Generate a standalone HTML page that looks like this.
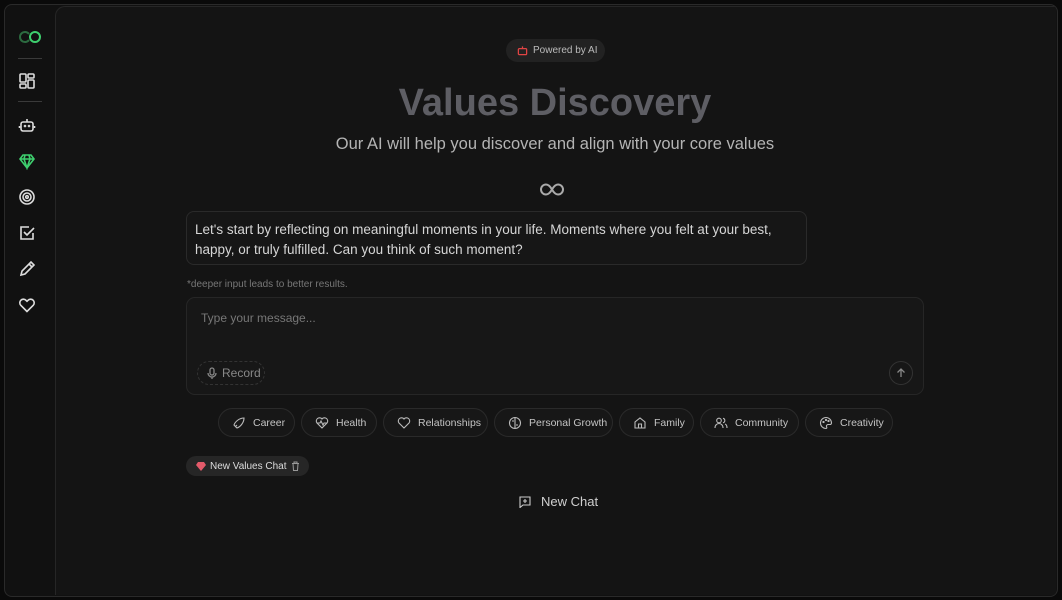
<!DOCTYPE html>
<html><head><meta charset="utf-8"><style>
*{box-sizing:border-box;margin:0;padding:0}
body{width:1062px;height:600px;background:#0a0a0a;font-family:"Liberation Sans",sans-serif;overflow:hidden;position:relative;color:#ccc}
.frame{position:absolute;left:4px;top:4px;width:1054px;height:593px;border:1px solid #2a2a2a;border-radius:8px;background:#111;overflow:hidden}
.side{position:absolute;left:0;top:0;width:50px;height:100%}
.main{position:absolute;left:50px;top:1px;right:1px;bottom:1px;background:#141414;border-left:1px solid #262626;border-top:1px solid #262626;border-radius:10px 0 0 0}
.ic{position:absolute;left:13px;width:18px;height:18px}
.hr{position:absolute;left:13px;width:24px;height:1px;background:#3a3a3a}
.abs{position:absolute}
.pill{position:absolute;height:29px;top:408px;border:1px solid #2a2a2a;border-radius:15px;background:#171717;font-size:10.5px;color:#c4c4c4;display:flex;align-items:center;padding-left:13px;gap:7px;white-space:nowrap}
.pill svg{width:14px;height:14px;flex:none}
</style></head><body>
<div class="frame">
<div class="side">
 <svg class="ic" style="top:23px;left:14px;width:22px" viewBox="0 0 22 14" fill="none" stroke-width="2"><path d="M10 4A5 5 0 1 0 10 10" stroke="#2c6b40"/><circle cx="16" cy="7" r="5" stroke="#3ecf6e"/></svg>
 <div class="hr" style="top:53px"></div>
 <svg class="ic" style="top:67px" viewBox="0 0 18 18" fill="none" stroke="#ddd" stroke-width="1.6"><rect x="2" y="2" width="6" height="8" rx="1"/><rect x="10" y="2" width="6" height="4" rx="1"/><rect x="10" y="8" width="6" height="8" rx="1"/><rect x="2" y="12" width="6" height="4" rx="1"/></svg>
 <div class="hr" style="top:96px"></div>
 <svg class="ic" style="top:111px" viewBox="0 0 18 18" fill="none" stroke="#ddd" stroke-width="1.6"><rect x="3" y="6" width="12" height="9" rx="2"/><path d="M9 6V3M1.5 10v2M16.5 10v2"/><circle cx="7" cy="10" r=".5"/><circle cx="11" cy="10" r=".5"/></svg>
 <svg class="ic" style="top:147px" viewBox="0 0 18 18" fill="none" stroke="#3ecf6e" stroke-width="1.6"><path d="M5 3h8l3 4-7 9-7-9z M2 7h14 M7 3l-1 4 3 9 3-9-1-4"/></svg>
 <svg class="ic" style="top:183px" viewBox="0 0 18 18" fill="none" stroke="#ddd" stroke-width="1.6"><circle cx="9" cy="9" r="7"/><circle cx="9" cy="9" r="4"/><circle cx="9" cy="9" r="1.3"/></svg>
 <svg class="ic" style="top:219px" viewBox="0 0 18 18" fill="none" stroke="#ddd" stroke-width="1.6"><path d="M15 9v6H3V3h8"/><path d="M6 8l3 3 7-7"/></svg>
 <svg class="ic" style="top:255px" viewBox="0 0 18 18" fill="none" stroke="#ddd" stroke-width="1.6"><path d="M3 15l1-4 9-9 3 3-9 9z M11 4l3 3"/></svg>
 <svg class="ic" style="top:291px" viewBox="0 0 18 18" fill="none" stroke="#ddd" stroke-width="1.6"><path d="M9 15.5L2.8 9.3a3.6 3.6 0 015.2-5L9 5.3l1-1a3.6 3.6 0 015.2 5z"/></svg>
</div>
<div class="main"></div>
</div>

<div class="abs" style="left:506px;top:39px;width:99px;height:23px;border-radius:12px;background:#222;font-size:10px;color:#bbb;display:flex;align-items:center;padding-left:11px;gap:5px;white-space:nowrap">
<svg width="11" height="11" viewBox="0 0 12 12" fill="none" stroke="#e04444" stroke-width="1.4"><rect x="1.5" y="4" width="9" height="6.5" rx="1"/><path d="M6 4V1.5"/></svg>Powered by AI</div>
<div class="abs" style="left:0;width:1110px;top:82px;text-align:center;font-size:38px;font-weight:bold;color:#5e5e64">Values Discovery</div>
<div class="abs" style="left:0;width:1110px;top:135px;text-align:center;font-size:16.5px;color:#b4b4b4">Our AI will help you discover and align with your core values</div>
<svg class="abs" style="left:540px;top:182px" width="24" height="15" viewBox="0 0 24 15" fill="none" stroke="#aaa" stroke-width="2"><path d="M12 7.5C10 4 8 2.5 6 2.5a5 5 0 000 10c2 0 4-1.5 6-5s4-5 6-5a5 5 0 010 10c-2 0-4-1.5-6-5"/></svg>
<div class="abs" style="left:186px;top:211px;width:621px;height:54px;border:1px solid #2a2a2a;border-radius:8px;background:#161616;font-size:13.5px;line-height:20px;color:#d6d6d6;padding:8px 8px">Let's start by reflecting on meaningful moments in your life. Moments where you felt at your best, happy, or truly fulfilled. Can you think of such moment?</div>
<div class="abs" style="left:187px;top:279px;font-size:10px;color:#777">*deeper input leads to better results.</div>
<div class="abs" style="left:186px;top:297px;width:738px;height:98px;border:1px solid #262626;border-radius:9px;background:#171717">
 <div class="abs" style="left:14px;top:13px;font-size:12px;color:#777">Type your message...</div>
 <div class="abs" style="left:10px;top:63px;width:68px;height:24px;border:1px dashed #333;border-radius:12px;font-size:12px;color:#888;display:flex;align-items:center;padding-left:9px;gap:5px"><svg width="10" height="13" viewBox="0 0 10 13" fill="none" stroke="#888" stroke-width="1.3"><rect x="3" y="1" width="4" height="7" rx="2"/><path d="M1 6a4 4 0 008 0M5 10v2"/></svg>Record</div>
 <div class="abs" style="left:702px;top:63px;width:24px;height:24px;border:1px solid #333;border-radius:50%;display:flex;align-items:center;justify-content:center"><svg width="10" height="10" viewBox="0 0 10 10" fill="none" stroke="#888" stroke-width="1.3"><path d="M5 9V1M1.5 4.5L5 1l3.5 3.5"/></svg></div>
</div>
<div class="pill" style="left:218px;width:77px"><svg viewBox="0 0 14 14" fill="none" stroke="#bbb" stroke-width="1.1"><path d="M3 11l2-2M5 12c3-1 7-5 7-10-5 0-9 4-10 7l3 3z"/></svg>Career</div>
<div class="pill" style="left:301px;width:76px"><svg viewBox="0 0 14 14" fill="none" stroke="#bbb" stroke-width="1.1"><path d="M7 12L2 7a3 3 0 015-4 3 3 0 015 4zM2 7h3l1-2 2 4 1-2h3"/></svg>Health</div>
<div class="pill" style="left:383px;width:105px"><svg viewBox="0 0 14 14" fill="none" stroke="#bbb" stroke-width="1.1"><path d="M7 12L2 7a3 3 0 015-4 3 3 0 015 4z"/></svg>Relationships</div>
<div class="pill" style="left:494px;width:119px"><svg viewBox="0 0 14 14" fill="none" stroke="#bbb" stroke-width="1.1"><circle cx="7" cy="7" r="5.5"/><path d="M7 2v10M4 5h2M8 9h2"/></svg>Personal Growth</div>
<div class="pill" style="left:619px;width:75px"><svg viewBox="0 0 14 14" fill="none" stroke="#bbb" stroke-width="1.1"><path d="M2 12V6l5-4 5 4v6zM5.5 12V8h3v4"/></svg>Family</div>
<div class="pill" style="left:700px;width:99px"><svg viewBox="0 0 14 14" fill="none" stroke="#bbb" stroke-width="1.1"><circle cx="5" cy="4.5" r="2.3"/><path d="M1 12c0-3 2-4.5 4-4.5s4 1.5 4 4.5M9 2.3a2.3 2.3 0 010 4.5M11 8c1.5.5 2 2 2 4"/></svg>Community</div>
<div class="pill" style="left:805px;width:88px"><svg viewBox="0 0 14 14" fill="none" stroke="#bbb" stroke-width="1.1"><path d="M7 1.5a5.5 5.5 0 000 11c1 0 1-1 .5-1.8S8 8.5 9 8.5h2a1.5 1.5 0 001.5-1.5A5.5 5.5 0 007 1.5z"/><circle cx="4.5" cy="6" r=".6"/><circle cx="7" cy="4" r=".6"/><circle cx="9.5" cy="5" r=".6"/></svg>Creativity</div>
<div class="abs" style="left:186px;top:456px;width:123px;height:20px;border-radius:10px;background:#262626;font-size:10px;color:#ddd;display:flex;align-items:center;padding-left:10px;gap:4px;white-space:nowrap"><svg width="10" height="10" viewBox="0 0 10 10"><path d="M2 1h6l2 3-5 6-5-6z" fill="#e35a6a"/></svg>New Values Chat <svg width="9" height="10" viewBox="0 0 9 10" fill="none" stroke="#999" stroke-width="1"><path d="M1 2.5h7M3 2.5V1h3v1.5M2 2.5l.5 7h4l.5-7"/></svg></div>
<div class="abs" style="left:519px;top:494px;font-size:13px;color:#d0d0d0;display:flex;align-items:center;gap:10px"><svg width="12" height="12" viewBox="0 0 12 12" fill="none" stroke="#ccc" stroke-width="1.1"><path d="M1 1h10v8H4l-3 2.5zM6 3v4M4 5h4"/></svg>New Chat</div>
</body></html>
